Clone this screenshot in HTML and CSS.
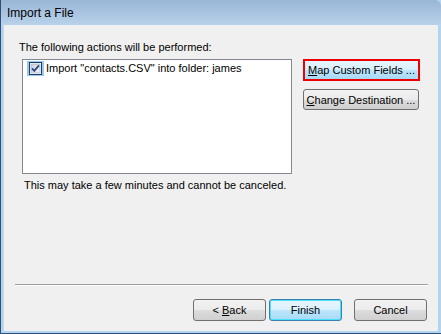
FILE: index.html
```html
<!DOCTYPE html>
<html>
<head>
<meta charset="utf-8">
<link rel="stylesheet" href="styles.css">
</head>
<body>
<div class="window">
  <div class="titlebar">Import a File</div>
  <div class="content">
    <div class="main">
      <div class="left">
        <div class="label">The following actions will be performed:</div>
        <div class="listbox">
          <div class="item">
            <span class="check-hl">
              <svg class="check" width="13" height="13" viewBox="0 0 13 13">
                <defs>
                  <linearGradient id="cb" x1="0" y1="0" x2="1" y2="1">
                    <stop offset="0" stop-color="#cbcfd5"/>
                    <stop offset="1" stop-color="#f6f6f6"/>
                  </linearGradient>
                </defs>
                <rect x="0.5" y="0.5" width="12" height="12" fill="#ffffff" stroke="#1c3f66"/>
                <rect x="2" y="2" width="9" height="9" fill="url(#cb)" stroke="#97a8bc" stroke-width="0.6"/>
                <path d="M3 6.3 L5.3 8.8 L10 3.4" fill="none" stroke="#2a4a86" stroke-width="1.8"/>
              </svg>
            </span>
            <span class="item-text">Import "contacts.CSV" into folder: james</span>
          </div>
        </div>
        <div class="note">This may take a few minutes and cannot be canceled.</div>
      </div>
      <div class="right">
        <div class="focus-ring"><button class="btn btn-map"><u>M</u>ap Custom Fields ...</button></div>
        <button class="btn btn-change"><u>C</u>hange Destination ...</button>
      </div>
    </div>
    <div class="footer">
      <div class="separator"></div>
      <div class="buttons">
        <button class="btn btn-foot">&lt; <u>B</u>ack</button>
        <button class="btn btn-foot btn-default">Finish</button>
        <button class="btn btn-foot btn-cancel">Cancel</button>
      </div>
    </div>
  </div>
</div>
</body>
</html>
```

FILE: styles.css
```css
html, body {
  margin: 0;
  padding: 0;
  background: #ffffff;
}

body {
  font-family: "Liberation Sans", Arial, sans-serif;
  font-size: 11px;
  color: #000000;
}

.window {
  box-sizing: border-box;
  width: 441px;
  height: 334px;
  display: flex;
  flex-direction: column;
  background: #b3d4ee;
  border-left: 1px solid #2d4f78;
  border-bottom: 1px solid #2d4f78;
  padding: 0 3px 2px 2px;
}

.titlebar {
  height: 25px;
  margin-left: -2px;
  margin-right: -3px;
  padding-left: 6px;
  box-sizing: border-box;
  line-height: 27px;
  font-size: 12px;
  background: linear-gradient(#9ab6d6, #b9d1ea);
  border-top-right-radius: 6px;
}

.content {
  flex: 1;
  display: flex;
  flex-direction: column;
  background: #f0f0f0;
  border-left: 1px solid #c6d8ea;
  padding: 15px 10px 10px 10px;
}

.main {
  display: flex;
  margin-left: 5px;
}

.left {
  display: flex;
  flex-direction: column;
  width: 273px;
  flex: none;
}

.label {
  line-height: 15px;
  white-space: nowrap;
}

.listbox {
  box-sizing: border-box;
  width: 270px;
  height: 115px;
  margin: 4px 0 0 3px;
  background: #ffffff;
  border: 1px solid #828790;
  padding: 1px 0 0 4px;
}

.item {
  display: flex;
  align-items: center;
  height: 15px;
}

.check-hl {
  display: flex;
  align-items: center;
  justify-content: center;
  width: 17px;
  height: 15px;
  background: #99c9ef;
}

.item-text {
  margin-left: 2px;
  line-height: 15px;
  white-space: nowrap;
}

.note {
  margin: 4px 0 0 5px;
  line-height: 15px;
  white-space: nowrap;
}

.right {
  display: flex;
  flex-direction: column;
  margin: 19px 0 0 11px;
  gap: 8px;
  align-items: flex-start;
}

.btn {
  box-sizing: border-box;
  font-family: inherit;
  font-size: 11px;
  color: #000000;
  border: 1px solid #707070;
  border-radius: 3px;
  background: linear-gradient(#f2f2f2 0%, #ebebeb 50%, #dddddd 51%, #cfcfcf 100%);
  padding: 0;
  margin: 0;
  line-height: 18px;
  white-space: nowrap;
}

.focus-ring {
  border: 2px solid #ee0000;
  display: flex;
}

.btn-map {
  width: 113px;
  height: 18px;
  border: 0;
  border-radius: 0;
  background: linear-gradient(#e5f4fc 0%, #d9effb 50%, #bde6fd 51%, #a7d9f5 100%);
  line-height: 17px;
}

.btn-change {
  width: 116px;
  height: 21px;
}

.footer {
  margin-top: auto;
  display: flex;
  flex-direction: column;
}

.separator {
  height: 1px;
  background: #a0a0a0;
  margin-left: 1px;
  border-bottom: 1px solid #ffffff;
}

.buttons {
  display: flex;
  justify-content: flex-end;
  margin-top: 13px;
  gap: 3px;
  padding-right: 1px;
}

.btn-foot {
  width: 73px;
  height: 22px;
}

.btn-default {
  border-color: #3c7fb1;
  background: linear-gradient(#eaf6fd 0%, #d9f0fc 50%, #bee6fd 51%, #a7d9f5 100%);
  box-shadow: inset 0 0 0 1px #48e0fb;
}

.btn-cancel {
  margin-left: 9px;
}
```
